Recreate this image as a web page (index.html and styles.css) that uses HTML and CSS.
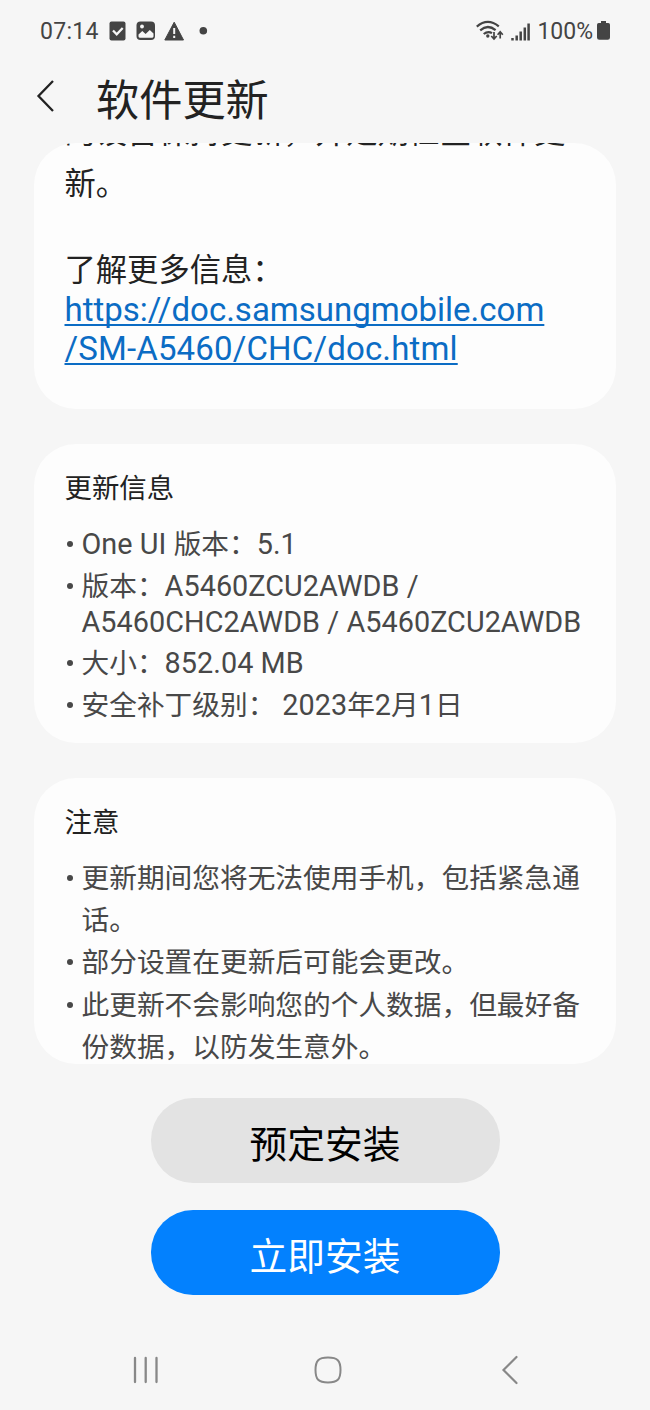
FILE: index.html
```html
<!DOCTYPE html>
<html lang="zh-CN">
<head>
<meta charset="utf-8">
<title>软件更新</title>
<link rel="stylesheet" href="styles.css">
</head>
<body>
<div class="screen">
  <div class="status">
    <span class="clock">07:14</span>
    <svg class="status-icons" width="104" height="24" viewBox="0 0 104 24">
      <rect x="0.5" y="2.500" width="16" height="19" rx="2" fill="#444"/>
      <path d="M4 11.500l3.700 3.800 6-6.300" fill="none" stroke="#f6f6f6" stroke-width="2.300"/>
      <rect x="27.500" y="2.500" width="18.500" height="18.500" rx="4" fill="#444"/>
      <circle cx="33" cy="7.500" r="1.900" fill="#f6f6f6"/>
      <path d="M29.500 17.500v-2l3.800-3.600 3.300 3 4.200-4 3.700 3.500v3.200q-.3 1.200-1.500 1.200H31q-1.300 0-1.500-1.300z" fill="#f6f6f6"/>
      <path d="M65.200 3.200L74.500 21H55.800z" fill="#444" stroke="#444" stroke-width="1" stroke-linejoin="round"/>
      <path d="M65.200 9v6M65.200 16.800v2.300" stroke="#f6f6f6" stroke-width="2"/>
      <circle cx="94.300" cy="11.700" r="3.800" fill="#444"/>
    </svg>
    <span class="spacer"></span>
    <svg width="54" height="24" viewBox="0 0 54 24">
      <g fill="none" stroke="#444" stroke-width="2.200">
        <path d="M.8 7.600Q11.600-1.800 22.800 7.300"/>
        <path d="M4.200 11.300Q11.700 4.800 19.600 11.100"/>
        <path d="M7.700 15Q12 11.500 16 14.200"/>
        <path d="M18 13v6.500M15.300 17l2.700 3 2.700-3M24.200 19.500v-6M21.600 15.800l2.600-3 2.600 3" stroke-width="1.700"/>
      </g>
      <circle cx="11.800" cy="17" r="1.700" fill="#444"/>
      <path d="M36.500 19v2.500M40.700 16.500v5M44.700 12.500v9M48.800 8.500v13M52.600 4.500v17" stroke="#444" stroke-width="2.500"/>
    </svg>
    <span class="percent">100%</span>
    <svg width="13" height="20" viewBox="0 0 13 20">
      <path d="M4 0h5v2h2.300Q13 2 13 3.700V16.500Q13 18.800 10.700 18.800H2.300Q0 18.800 0 16.500V3.700Q0 2 1.700 2H4z" fill="#444"/>
    </svg>
  </div>

  <header class="header">
    <svg width="20" height="34" viewBox="0 0 20 34">
      <path d="M17 2L2.500 17 17 32" fill="none" stroke="#222" stroke-width="2.300"/>
    </svg>
    <h1 class="title">软件更新</h1>
  </header>

  <main class="scroll">
    <section class="card intro">
      <p class="intro-text first">的设备保持更新，并定期检查软件更</p>
      <p class="intro-text">新。</p>
      <p class="intro-text more">了解更多信息：</p>
      <a class="link" href="#">https://doc.samsungmobile.com<br><span class="path">/SM-A5460/CHC/doc.html</span></a>
    </section>

    <section class="card info">
      <h2 class="heading">更新信息</h2>
      <ul class="list">
        <li><span class="latin">One UI </span>版本：<span class="latin">5.1</span></li>
        <li>版本：<span class="latin">A5460ZCU2AWDB /</span><span class="latin wrapped">A5460CHC2AWDB / A5460ZCU2AWDB</span></li>
        <li>大小：<span class="latin">852.04 MB</span></li>
        <li>安全补丁级别： <span class="latin">2023</span>年<span class="latin">2</span>月<span class="latin">1</span>日</li>
      </ul>
    </section>

    <section class="card">
      <h2 class="heading">注意</h2>
      <ul class="list notes">
        <li>更新期间您将无法使用手机，包括紧急通<br>话。</li>
        <li>部分设置在更新后可能会更改。</li>
        <li>此更新不会影响您的个人数据，但最好备<br>份数据，以防发生意外。</li>
      </ul>
    </section>
  </main>

  <div class="actions">
    <button class="button">预定安装</button>
    <button class="button primary">立即安装</button>
  </div>

  <nav class="nav">
    <svg width="26" height="30" viewBox="0 0 26 30">
      <path d="M2 3v24M12.700 3v24M23.500 3v24" stroke="#888" stroke-width="2.300" stroke-linecap="round"/>
    </svg>
    <svg class="home" width="30" height="30" viewBox="0 0 30 30">
      <path d="M15 2.500c9.500 0 12.500 3 12.500 12.500S24.500 27.500 15 27.500 2.500 24.500 2.500 15 5.500 2.500 15 2.500z" fill="none" stroke="#888" stroke-width="2"/>
    </svg>
    <svg width="18" height="30" viewBox="0 0 18 30">
      <path d="M15.500 2L2.500 15l13 13" fill="none" stroke="#888" stroke-width="2.200" stroke-linecap="round"/>
    </svg>
  </nav>
</div>
</body>
</html>
```
FILE: styles.css
```css
* {
  box-sizing: border-box;
  margin: 0;
  padding: 0;
}

body {
  background: #f6f6f6;
  font-family: Roboto, "Noto Sans CJK SC", sans-serif;
  color: #222;
}

svg {
  display: block;
  flex: none;
}

.screen {
  width: 650px;
  height: 1410px;
  display: flex;
  flex-direction: column;
  overflow: hidden;
}

.status {
  height: 60px;
  display: flex;
  align-items: center;
  padding: 2px 40px 0;
  color: #444;
  font-size: 23px;
}

.clock {
  width: 69px;
  letter-spacing: 0.3px;
}

.spacer {
  flex: 1;
}

.percent {
  margin: 0 4px 0 7px;
}

.header {
  height: 83px;
  display: flex;
  align-items: center;
  gap: 40px;
  padding: 0 36px 11px;
}

.title {
  font-size: 43.200px;
  font-weight: 400;
  line-height: 60px;
  padding-top: 11px;
}

.scroll {
  width: 582px;
  height: 921px;
  margin: 0 34px;
  flex: none;
  display: flex;
  flex-direction: column;
  gap: 35px;
  overflow: hidden;
  border-radius: 42px;
}

.card {
  flex: none;
  padding: 27px 30.500px;
  border-radius: 42px;
  background: #fdfdfd;
}

.intro {
  height: 298px;
  margin-top: -32px;
  padding-top: 0;
}

.intro-text {
  font-size: 31.300px;
  line-height: 43px;
  white-space: nowrap;
}

.first {
  margin-bottom: 9px;
}

.more {
  margin-top: 43px;
}

.link {
  display: block;
  margin-top: -1px;
  color: #0b6cc4;
  font-size: 33px;
  line-height: 38.500px;
  text-decoration-thickness: 1.500px;
  text-underline-offset: 3px;
  text-decoration-skip-ink: none;
  white-space: nowrap;
}

.path {
  letter-spacing: 0.15px;
}

.info {
  height: 299px;
}

.heading {
  font-size: 27.400px;
  font-weight: 400;
  line-height: 36px;
}

.list {
  margin-top: 17px;
  list-style: none;
  color: #484848;
  font-size: 27.700px;
  line-height: 42px;
}

.notes {
  line-height: 42.200px;
}

.list li {
  position: relative;
  padding-left: 17px;
  white-space: nowrap;
}

.list li::before {
  content: "";
  position: absolute;
  left: 2px;
  top: 17px;
  width: 6px;
  height: 6px;
  border-radius: 50%;
  background: #484848;
}

.latin {
  font-size: 28.800px;
  line-height: 1;
  letter-spacing: 0.05px;
}

.latin.wrapped {
  display: block;
  line-height: 29px;
  margin-bottom: 6px;
}

.actions {
  display: flex;
  flex-direction: column;
  align-items: center;
  gap: 27px;
  padding-top: 34px;
}

.button {
  width: 349px;
  height: 85px;
  border: 0;
  border-radius: 42px;
  background: #e3e3e3;
  color: #000;
  font: 400 37.700px/76px Roboto, "Noto Sans CJK SC", sans-serif;
  padding-top: 9px;
}

.primary {
  background: #0381fe;
  color: #fff;
}

.nav {
  display: flex;
  justify-content: space-between;
  padding: 60px 131px 0 133px;
}

.home {
  margin-right: 5px;
}
```
